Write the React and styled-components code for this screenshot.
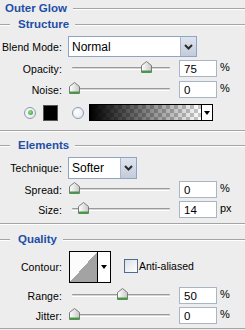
import React from "react";
import styled, { createGlobalStyle } from "styled-components";

const Global = createGlobalStyle`
  html, body { margin: 0; padding: 0; background: #ededed; }
  body { font-family: "Liberation Sans", Arial, sans-serif; font-size: 11px; color: #000; }
`;

const Panel = styled.div`
  width: 245px;
  height: 330px;
  overflow: hidden;
  background: #ededed;
  display: flex;
  flex-direction: column;
`;

const HeaderRow = styled.div`
  display: flex;
  align-items: center;
  height: 16px;
  margin-top: ${(p) => p.$mt || 0}px;
  gap: 6px;
`;

const Stub = styled.div`
  width: 10px;
  height: 1px;
  background: #a4a4a4;
  box-shadow: 0 1px 0 #fff;
  margin-right: -1px;
`;

const Title = styled.span`
  font-weight: bold;
  color: #1f4ea6;
  font-size: 11.5px;
  margin-left: ${(p) => p.$ml || 0}px;
  white-space: nowrap;
`;

const Rule = styled.div`
  flex: 1;
  height: 1px;
  background: #a4a4a4;
  box-shadow: 0 1px 0 #fff;
`;

const Separator = styled.div`
  height: 1px;
  background: #a4a4a4;
  border-bottom: 1px solid #fff;
  margin-top: ${(p) => p.$mt || 0}px;
`;

const Row = styled.div`
  display: flex;
  align-items: center;
  height: ${(p) => p.$h}px;
  margin-top: ${(p) => p.$mt || 0}px;
`;

const Label = styled.div`
  width: 62px;
  text-align: right;
  white-space: nowrap;
  flex: none;
  font-size: 10.5px;
  letter-spacing: 0.1px;
`;

const Select = styled.div`
  margin-left: 6px;
  width: ${(p) => p.$w}px;
  height: 100%;
  box-sizing: border-box;
  background: #fff;
  border: 1px solid #8ea4c4;
  display: flex;
  align-items: center;
  justify-content: space-between;
  padding-left: 3px;
  font-size: 12px;
`;

const SelectButton = styled.div`
  width: 16px;
  height: 100%;
  box-sizing: border-box;
  border-left: 1px solid #aab6cc;
  background: linear-gradient(#dfe4ee, #c3cbdb);
  display: flex;
  align-items: center;
  justify-content: center;
`;

const Track = styled.div`
  position: relative;
  margin-left: 10px;
  width: 98px;
  height: 3px;
  box-sizing: border-box;
  border-top: 1px solid #9a9a9a;
  border-bottom: 1px solid #fff;
  background: #d6d6d6;
  border-radius: 1px;
`;

const ThumbWrap = styled.div`
  position: absolute;
  top: -7px;
  width: 11px;
  height: 12px;
  margin-left: -5px;
`;

const NumBox = styled.div`
  margin-left: 9px;
  width: 38px;
  height: 17px;
  box-sizing: border-box;
  background: #fff;
  border: 1px solid #a9b4c4;
  padding-left: 4px;
  display: flex;
  align-items: center;
  font-size: 11.5px;
`;

const Unit = styled.span`
  margin-left: 3px;
  align-self: flex-start;
  margin-top: 1px;
`;

const Radio = styled.div`
  width: 12px;
  height: 12px;
  box-sizing: border-box;
  border-radius: 50%;
  border: 1px solid #8a9ab0;
  background: radial-gradient(circle at 40% 40%, #ffffff, #dfe3ea);
  display: flex;
  align-items: center;
  justify-content: center;
  margin-left: ${(p) => p.$ml || 0}px;
  flex: none;
  &::after {
    content: "";
    width: 5px;
    height: 5px;
    border-radius: 50%;
    background: ${(p) => (p.$on ? "radial-gradient(circle at 40% 40%, #8fe08f, #2f9a2f)" : "transparent")};
  }
`;

const Swatch = styled.div`
  width: 15px;
  height: 16px;
  box-sizing: border-box;
  background: #000;
  border: 1px solid #555;
  margin-left: 7px;
  flex: none;
`;

const Gradient = styled.div`
  margin-left: 5px;
  width: 124px;
  height: 17px;
  box-sizing: border-box;
  border: 1px solid #000;
  display: flex;
  background: #fff;
`;

const GradFill = styled.div`
  flex: 1;
  background:
    linear-gradient(to right, rgba(0,0,0,1), rgba(0,0,0,0)),
    repeating-conic-gradient(#c8c8c8 0% 25%, #ffffff 0% 50%) 0 0 / 8px 8px;
`;

const DropPart = styled.div`
  width: ${(p) => p.$w}px;
  border-left: 1px solid #000;
  background: #fff;
  display: flex;
  align-items: center;
  justify-content: center;
  &::after {
    content: "";
    border-left: 3px solid transparent;
    border-right: 3px solid transparent;
    border-top: 4px solid #000;
  }
`;

const Contour = styled.div`
  margin-left: 7px;
  width: 42px;
  height: 32px;
  box-sizing: border-box;
  border: 1px solid #000;
  display: flex;
  background: #fff;
`;

const ContourCurve = styled.div`
  flex: 1;
  background: linear-gradient(to top left, #a3a3a3 50%, #fcfcfc 50%);
`;

const CheckLabel = styled.label`
  display: flex;
  align-items: center;
  margin-left: 13px;
  align-self: flex-start;
  margin-top: 8px;
  gap: 1px;
  font-size: 10.5px;
`;

const CheckBox = styled.span`
  width: 14px;
  height: 14px;
  box-sizing: border-box;
  border: 1px solid #4f6a93;
  background: linear-gradient(135deg, #dcdfe6, #ffffff);
`;

const BottomLine = styled.div`
  height: 1px;
  background: #a4a4a4;
  margin-top: 4px;
`;

function Chevron() {
  return (
    <svg width="9" height="6" viewBox="0 0 9 6">
      <path d="M1 1 L4.5 4.5 L8 1" fill="none" stroke="#2b2b2b" strokeWidth="2" />
    </svg>
  );
}

function Thumb({ x }) {
  return (
    <ThumbWrap style={{ left: x }}>
      <svg width="11" height="12" viewBox="0 0 11 12">
        <defs>
          <linearGradient id="tg" x1="0" y1="0" x2="1" y2="0">
            <stop offset="0" stopColor="#ffffff" />
            <stop offset="1" stopColor="#c9c9c9" />
          </linearGradient>
        </defs>
        <path d="M5.5 0.5 L10.5 4.5 L10.5 11.5 L0.5 11.5 L0.5 4.5 Z" fill="url(#tg)" stroke="#7a7a7a" />
        <path d="M1 10.5 L10 10.5" stroke="#3aa03a" strokeWidth="2" />
      </svg>
    </ThumbWrap>
  );
}

function SliderRow({ label, pos, value, unit, mt }) {
  return (
    <Row $h={17} $mt={mt}>
      <Label>{label}</Label>
      <Track>
        <Thumb x={pos} />
      </Track>
      <NumBox>{value}</NumBox>
      <Unit>{unit}</Unit>
    </Row>
  );
}

export default function App() {
  return (
    <>
      <Global />
      <Panel>
        <HeaderRow>
          <Title $ml={5}>Outer Glow</Title>
          <Rule />
        </HeaderRow>
        <HeaderRow>
          <Stub />
          <Title $ml={3}>Structure</Title>
          <Rule />
        </HeaderRow>
        <Row $h={21} $mt={4}>
          <Label>Blend Mode:</Label>
          <Select $w={129}>
            Normal
            <SelectButton><Chevron /></SelectButton>
          </Select>
        </Row>
        <SliderRow label="Opacity:" pos={74} value="75" unit="%" mt={3} />
        <SliderRow label="Noise:" pos={2} value="0" unit="%" mt={4} />
        <Row $h={17} $mt={6}>
          <Radio $ml={24} $on />
          <Swatch />
          <Radio $ml={14} />
          <Gradient>
            <GradFill />
            <DropPart $w={10} />
          </Gradient>
        </Row>
        <Separator $mt={9} />
        <HeaderRow $mt={5}>
          <Stub />
          <Title $ml={3}>Elements</Title>
          <Rule />
        </HeaderRow>
        <Row $h={22} $mt={4}>
          <Label>Technique:</Label>
          <Select $w={69}>
            Softer
            <SelectButton><Chevron /></SelectButton>
          </Select>
        </Row>
        <SliderRow label="Spread:" pos={2} value="0" unit="%" mt={2} />
        <SliderRow label="Size:" pos={11} value="14" unit="px" mt={3} />
        <Separator $mt={5} />
        <HeaderRow $mt={6}>
          <Stub />
          <Title $ml={3}>Quality</Title>
          <Rule />
        </HeaderRow>
        <Row $h={32} $mt={4}>
          <Label>Contour:</Label>
          <Contour>
            <ContourCurve />
            <DropPart $w={12} />
          </Contour>
          <CheckLabel>
            <CheckBox />
            Anti-aliased
          </CheckLabel>
        </Row>
        <SliderRow label="Range:" pos={50} value="50" unit="%" mt={4} />
        <SliderRow label="Jitter:" pos={2} value="0" unit="%" mt={3} />
        <BottomLine />
      </Panel>
    </>
  );
}
